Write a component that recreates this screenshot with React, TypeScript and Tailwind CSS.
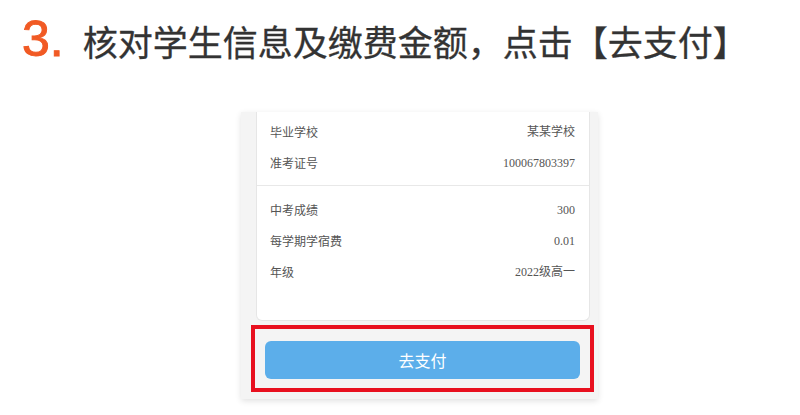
import React from 'react';

const sans = "font-['Noto_Sans_CJK_SC','Noto_Sans',sans-serif]";

interface RowProps {
  label: string;
  value: string;
}

function InfoRow({ label, value }: RowProps) {
  return (
    <div className="flex h-[31px] items-center justify-between">
      <span className={`${sans} text-[12px] text-[#555]`}>{label}</span>
      <span className="font-['Liberation_Serif','Noto_Sans_CJK_SC',serif] text-[12px] text-[#555]">{value}</span>
    </div>
  );
}

export default function App() {
  return (
    <div className="h-[415px] w-[800px] overflow-hidden bg-white">
      <div className="flex items-baseline pl-[22px] pt-[14px]">
        <span className="font-['Liberation_Sans',sans-serif] text-[50px] leading-none text-[#f15a24] [-webkit-text-stroke:1px_#f15a24]">3.</span>
        <span className={`${sans} ml-[19px] text-[35px] leading-none text-[#333] [-webkit-text-stroke:0.3px_#333]`}>
          核对学生信息及缴费金额，点击【去支付】
        </span>
      </div>

      <div className="ml-[241px] mt-[48px] w-[357px] bg-[#f4f4f4] pb-[7px] shadow-[0_2px_6px_rgba(0,0,0,0.12)]">
        <div className="ml-[15px] mr-[8px] rounded-b-[6px] border border-t-0 border-[#e6e6e6] bg-white">
          <div className="border-b border-[#e8e8e8] pb-[7px] pl-[13px] pr-[14px] pt-[4px]">
            <InfoRow label="毕业学校" value="某某学校" />
            <InfoRow label="准考证号" value="100067803397" />
          </div>
          <div className="pb-[33px] pl-[13px] pr-[14px] pt-[8px]">
            <InfoRow label="中考成绩" value="300" />
            <InfoRow label="每学期学宿费" value="0.01" />
            <InfoRow label="年级" value="2022级高一" />
          </div>
        </div>

        <div className="ml-[10px] mr-[4px] mt-[4px] border-[4px] border-[#e8101f] px-[10px] pb-[9px] pt-[12px]">
          <button className={`${sans} flex h-[38px] w-full items-center justify-center rounded-[6px] bg-[#5caeea] text-[16px] text-white`}>
            去支付
          </button>
        </div>
      </div>
    </div>
  );
}
